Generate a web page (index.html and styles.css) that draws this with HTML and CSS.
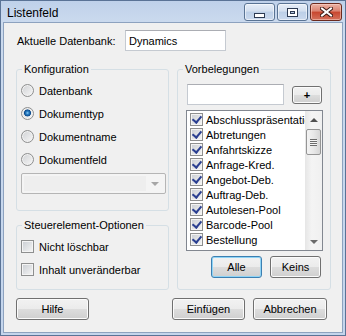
FILE: index.html
```html
<!DOCTYPE html>
<html lang="de">
<head>
  <meta charset="UTF-8" />
  <title>Listenfeld</title>
  <link rel="stylesheet" href="styles.css">
</head>
<body>
  <div class="window">
    <div class="titlebar">
      <span class="title">Listenfeld</span>
      <div class="caption-buttons">
        <span class="cap cap-min"><span class="min-glyph"></span></span>
        <span class="cap cap-max"><span class="max-glyph"></span></span>
        <span class="cap cap-close">
          <svg width="13" height="10" viewBox="0 0 13 10">
            <path d="M2 1.5 L11 8.5 M11 1.5 L2 8.5" stroke="#3b1a14" stroke-width="4" stroke-linecap="square"/>
            <path d="M2 1.5 L11 8.5 M11 1.5 L2 8.5" stroke="#fff" stroke-width="2" stroke-linecap="square"/>
          </svg>
        </span>
      </div>
    </div>

    <div class="client">
      <div class="db-row">
        <label>Aktuelle Datenbank:</label>
        <input class="textbox" type="text" value="Dynamics" />
      </div>

      <div class="columns">
        <div class="left-col">
          <fieldset class="group group-config">
            <legend>Konfiguration</legend>
            <div class="option-list">
              <label class="option-row"><span class="radio"></span>Datenbank</label>
              <label class="option-row"><span class="radio checked"></span>Dokumenttyp</label>
              <label class="option-row"><span class="radio"></span>Dokumentname</label>
              <label class="option-row"><span class="radio"></span>Dokumentfeld</label>
            </div>
            <div class="combo"><span class="combo-field"></span><span class="combo-arrow"></span></div>
          </fieldset>

          <fieldset class="group group-options">
            <legend>Steuerelement-Optionen</legend>
            <div class="option-list">
              <label class="option-row"><span class="check"></span>Nicht löschbar</label>
              <label class="option-row"><span class="check"></span>Inhalt unveränderbar</label>
            </div>
          </fieldset>
        </div>

        <fieldset class="group group-presets">
          <legend>Vorbelegungen</legend>
          <div class="add-row">
            <input class="textbox add-input" type="text" />
            <button class="btn btn-plus">+</button>
          </div>
          <div class="listbox">
            <ul class="list-items">
              <li><span class="check checked"></span><span class="item-text">Abschlusspräsentation</span></li>
              <li><span class="check checked"></span><span class="item-text">Abtretungen</span></li>
              <li><span class="check checked"></span><span class="item-text">Anfahrtskizze</span></li>
              <li><span class="check checked"></span><span class="item-text">Anfrage-Kred.</span></li>
              <li><span class="check checked"></span><span class="item-text">Angebot-Deb.</span></li>
              <li><span class="check checked"></span><span class="item-text">Auftrag-Deb.</span></li>
              <li><span class="check checked"></span><span class="item-text">Autolesen-Pool</span></li>
              <li><span class="check checked"></span><span class="item-text">Barcode-Pool</span></li>
              <li><span class="check checked"></span><span class="item-text">Bestellung</span></li>
            </ul>
            <div class="scrollbar">
              <span class="sb-btn"><span class="arrow-up"></span></span>
              <span class="sb-thumb"><span class="grip"></span></span>
              <span class="sb-track"></span>
              <span class="sb-btn"><span class="arrow-down"></span></span>
            </div>
          </div>
          <div class="select-row">
            <button class="btn btn-small btn-default">Alle</button>
            <button class="btn btn-small">Keins</button>
          </div>
        </fieldset>
      </div>

      <div class="footer">
        <button class="btn btn-wide">Hilfe</button>
        <div class="footer-right">
          <button class="btn btn-wide">Einfügen</button>
          <button class="btn btn-wide btn-cancel">Abbrechen</button>
        </div>
      </div>
    </div>
  </div>
</body>
</html>
```

FILE: styles.css
```css
/* Windows 7 basic dialog look */
* {
  box-sizing: border-box;
}
body {
  margin: 0;
  font-family: "Liberation Sans", Arial, sans-serif;
  font-size: 11px;
  color: #000;
}
.window {
  width: 346px;
  height: 336px;
  border: 1px solid #5a7396;
  padding: 0 2px 2px;
  background: linear-gradient(#bfd1ea, #cbdaee 22px, #c4d5ec);
  display: flex;
  flex-direction: column;
}

/* title bar */
.titlebar {
  height: 21px;
  display: flex;
  align-items: flex-start;
}
.title {
  font-size: 12px;
  line-height: 14px;
  margin: 5px 0 0 4px;
}
.caption-buttons {
  margin: 2px 1px 0 auto;
  display: flex;
  gap: 2px;
}
.cap {
  width: 31px;
  height: 18px;
  border: 1px solid #5a7494;
  border-radius: 3px;
  background: linear-gradient(#e6eef8, #d3dfef 45%, #bccfe7 50%, #cad9ee);
  box-shadow: inset 0 0 0 1px rgba(255, 255, 255, 0.55);
  display: flex;
  align-items: center;
  justify-content: center;
}
.cap-close {
  width: 32px;
  border-color: #6b2a1e;
  background: linear-gradient(#ebb2a4, #da8270 45%, #c8462e 50%, #d4715c);
  box-shadow: inset 0 0 0 1px rgba(255, 220, 210, 0.5);
}
.min-glyph {
  width: 11px;
  height: 5px;
  margin-top: 6px;
  border: 1px solid #2c3a52;
  background: #fff;
}
.max-glyph {
  width: 11px;
  height: 9px;
  border: 1px solid #2c3a52;
  background: #b9cbe3;
  box-shadow: inset 0 0 0 2px #fff, inset 0 0 0 3px #2c3a52;
}

/* client area */
.client {
  flex: 1;
  background: #f0f0f0;
  border: 1px solid #8da2bf;
  padding: 7px 0 0 12px;
}
.db-row {
  display: grid;
  grid-template-columns: 108px 101px;
  align-items: center;
  margin-left: 1px;
}
.textbox {
  height: 21px;
  border: 1px solid #c5cad1;
  border-top-color: #abadb3;
  background: #fff;
  padding: 0 3px;
  font: inherit;
  color: #000;
}
.columns {
  display: grid;
  grid-template-columns: 153px 154px;
  column-gap: 8px;
  margin-top: 12px;
}
.left-col {
  display: flex;
  flex-direction: column;
  gap: 8px;
}
.group {
  margin: 0;
  padding: 0;
  min-width: 0;
  border: 1px solid #d5dfe5;
  border-radius: 3px;
}
.group legend {
  margin-left: 5px;
  padding: 0 2px;
  line-height: 13px;
}
.group-config {
  height: 148px;
}
.group-options {
  height: 71px;
}
.group-presets {
  height: 227px;
}

/* radio and check rows */
.option-list {
  margin-top: 3px;
}
.option-row {
  display: flex;
  align-items: center;
  height: 23px;
  padding-left: 4px;
}
.radio,
.check {
  flex: none;
  width: 13px;
  height: 13px;
  margin-right: 5px;
  border: 1px solid #8e8f8f;
}
.radio {
  border-radius: 50%;
  background: linear-gradient(135deg, #cfd1d4, #f7f7f7);
  box-shadow: inset 0 0 0 1px #f2f2f2;
}
.radio.checked {
  background:
    radial-gradient(circle at 50% 45%, #8fd0f7 0, #2c80c6 1.5px, #0b4a8c 3.2px, transparent 3.8px),
    linear-gradient(135deg, #cfd1d4, #f7f7f7);
}
.check {
  position: relative;
  background: linear-gradient(135deg, #c9cdd2, #f6f6f6);
  box-shadow: inset 0 0 0 1px #f4f4f4;
}
.check.checked::after {
  content: "";
  position: absolute;
  left: 3px;
  top: 0;
  width: 4px;
  height: 7px;
  border-right: 2px solid #2a3f91;
  border-bottom: 2px solid #2a3f91;
  transform: rotate(40deg);
}

/* disabled combo */
.combo {
  display: flex;
  margin: 2px 0 0 4px;
  width: 145px;
  height: 21px;
  padding: 2px;
  border: 1px solid #b5b5b5;
  border-radius: 2px;
  background: #f4f4f4;
}
.combo-field {
  flex: 1;
  background: #eeeeee;
}
.combo-arrow {
  width: 17px;
  display: flex;
  align-items: center;
  justify-content: center;
}
.combo-arrow::after {
  content: "";
  border-left: 4px solid transparent;
  border-right: 4px solid transparent;
  border-top: 4px solid #a6a6a6;
  margin-top: 1px;
}

/* right group */
.add-row {
  display: flex;
  align-items: flex-start;
  gap: 8px;
  margin: 8px 0 0 9px;
}
.add-input {
  width: 97px;
}
.btn {
  font: inherit;
  color: #000;
  padding: 0;
  border: 1px solid #707070;
  border-radius: 3px;
  background: linear-gradient(#f2f2f2, #ebebeb 50%, #dddddd 50%, #cfcfcf);
  box-shadow: inset 0 0 0 1px #fbfbfb;
}
.btn-plus {
  width: 30px;
  height: 18px;
  margin-top: 2px;
  font-weight: bold;
}
.listbox {
  display: flex;
  width: 137px;
  height: 141px;
  margin: 5px 0 0 8px;
  border: 1px solid #828790;
  background: #fff;
}
.list-items {
  flex: 1;
  min-width: 0;
  margin: 0;
  padding: 1px 0 0;
  list-style: none;
  overflow: hidden;
}
.list-items li {
  display: flex;
  align-items: center;
  height: 15px;
  padding-left: 3px;
  white-space: nowrap;
}
.list-items .check {
  margin-right: 3px;
}
.scrollbar {
  width: 17px;
  display: flex;
  flex-direction: column;
  background: linear-gradient(90deg, #e6e6e6, #f4f4f4 40%, #f0f0f0);
}
.sb-btn {
  height: 17px;
  display: flex;
  align-items: center;
  justify-content: center;
}
.arrow-up {
  border-left: 4px solid transparent;
  border-right: 4px solid transparent;
  border-bottom: 4px solid #505050;
}
.arrow-down {
  border-left: 4px solid transparent;
  border-right: 4px solid transparent;
  border-top: 4px solid #6a6a6a;
}
.sb-thumb {
  height: 26px;
  margin: 1px 1px 0;
  border: 1px solid #959595;
  border-radius: 2px;
  background: linear-gradient(90deg, #f3f3f3, #e8e8e8 50%, #d6d6d6);
  display: flex;
  align-items: center;
  justify-content: center;
}
.grip {
  width: 7px;
  height: 7px;
  background: repeating-linear-gradient(#6b6b6b 0 1px, #f4f4f4 1px 2px);
}
.sb-track {
  flex: 1;
}
.select-row {
  display: flex;
  gap: 8px;
  margin: 5px 0 0 33px;
}
.btn-small {
  width: 51px;
  height: 22px;
}
.btn-default {
  border-color: #3c7fb1;
  box-shadow: inset 0 0 0 1px #8fd4f6;
}

/* bottom buttons */
.footer {
  display: flex;
  margin-top: 8px;
}
.btn-wide {
  width: 73px;
  height: 22px;
}
.footer-right {
  display: flex;
  gap: 8px;
  margin-left: 83px;
}
.btn-cancel {
  width: 74px;
}
```
